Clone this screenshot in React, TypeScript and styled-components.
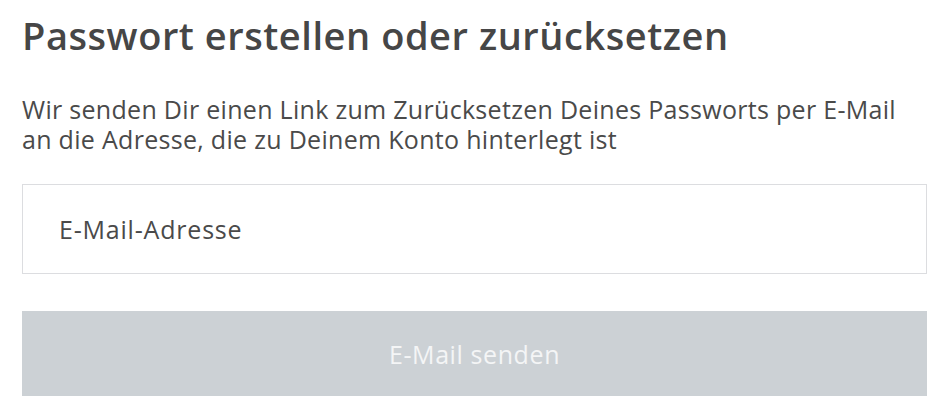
import React, { useState } from 'react';
import styled, { createGlobalStyle } from 'styled-components';

const GlobalStyle = createGlobalStyle`
  html, body {
    margin: 0;
    padding: 0;
    background: #ffffff;
  }
  body {
    font-family: 'Open Sans', 'Noto Sans', sans-serif;
    color: #4a4a4a;
  }
`;

const Page = styled.div`
  display: flex;
  flex-direction: column;
  padding: 10px 12px 0 22px;
`;

const Title = styled.h1`
  margin: 0;
  font-size: 38px;
  font-weight: 600;
  line-height: 50px;
  color: #464646;
  letter-spacing: 0.55px;
`;

const Intro = styled.p`
  margin: 34px 0 0;
  font-size: 25px;
  line-height: 30px;
  font-weight: 400;
  letter-spacing: 0.3px;
  color: #4a4a4a;
`;

const EmailInput = styled.input`
  box-sizing: border-box;
  width: 100%;
  height: 90px;
  margin-top: 30px;
  padding: 0 36px;
  border: 1px solid #dcdde0;
  border-radius: 0;
  font-family: inherit;
  font-size: 25px;
  letter-spacing: 0.8px;
  color: #4a4a4a;
  background: #ffffff;

  &::placeholder {
    color: #4a4a4a;
    opacity: 1;
  }

  &:focus {
    outline: 0;
  }
`;

const SendButton = styled.button`
  box-sizing: border-box;
  width: 100%;
  height: 85px;
  margin-top: 37px;
  border: none;
  border-radius: 0;
  background: #ccd1d5;
  color: #f4f5f6;
  font-family: inherit;
  font-size: 25px;
  letter-spacing: 0.6px;
  cursor: default;
`;

const App = () => {
  const [email, setEmail] = useState<string>('');

  return (
    <>
      <GlobalStyle />
      <Page>
        <Title>Passwort erstellen oder zurücksetzen</Title>
        <Intro>
          Wir senden Dir einen Link zum Zurücksetzen Deines Passworts per E-Mail
          an die Adresse, die zu Deinem Konto hinterlegt ist
        </Intro>
        <EmailInput
          type='email'
          placeholder='E-Mail-Adresse'
          value={email}
          onChange={(e: React.ChangeEvent<HTMLInputElement>) =>
            setEmail(e.target.value)
          }
        />
        <SendButton type='submit' disabled={!email}>
          E-Mail senden
        </SendButton>
      </Page>
    </>
  );
};

export default App;
